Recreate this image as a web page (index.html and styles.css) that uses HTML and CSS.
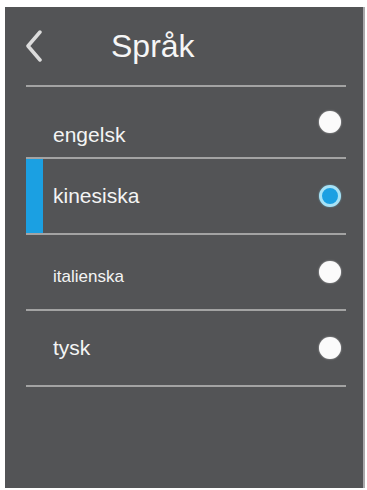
FILE: index.html
```html
<!DOCTYPE html>
<html lang="sv">
<head>
<meta charset="utf-8">
<title>Språk</title>
<link rel="stylesheet" href="styles.css">
</head>
<body>
<div class="panel">
  <header class="header">
    <svg class="back" width="18" height="32" viewBox="0 0 18 32" aria-hidden="true">
      <polyline points="15,2 3,16 15,30" fill="none" stroke="#dcdcdc" stroke-width="3.5" stroke-linecap="round" stroke-linejoin="round"/>
    </svg>
    <h1 class="title">Språk</h1>
  </header>
  <ul class="list">
    <li class="row row--first"><span class="label label--low">engelsk</span><span class="radio"></span></li>
    <li class="row row--selected"><span class="label">kinesiska</span><span class="radio radio--on"></span></li>
    <li class="row"><span class="label label--small">italienska</span><span class="radio"></span></li>
    <li class="row"><span class="label">tysk</span><span class="radio"></span></li>
  </ul>
</div>
</body>
</html>
```
FILE: styles.css
```css
html, body {
  margin: 0;
  padding: 0;
  background: #ffffff;
}
body {
  font-family: "Liberation Sans", Arial, sans-serif;
  color: #f4f4f4;
}
.panel {
  margin: 7px 2px 0 5px;
  width: 358px;
  height: 481px;
  background: #535456;
  border-right: 2px solid #a9a9ab;
  box-sizing: content-box;
}
.header {
  height: 78px;
  display: flex;
  align-items: center;
  margin: 0 17px 0 21px;
  border-bottom: 2px solid #a3a3a3;
}
.back {
  display: block;
  flex: none;
  margin-left: -1px;
}
.title {
  margin: 0 0 0 68px;
  font-size: 32px;
  font-weight: normal;
  color: #f6f6f6;
}
.list {
  list-style: none;
  margin: 0 17px 0 21px;
  padding: 0;
}
.row {
  height: 74px;
  display: flex;
  align-items: center;
  justify-content: space-between;
  padding: 0 5px 0 27px;
  border-bottom: 2px solid #a3a3a3;
}
.row--first {
  height: 70px;
}
.row--selected {
  box-shadow: inset 17px 0 0 #1ba0e2;
}
.label {
  font-size: 21px;
  color: #f4f4f4;
}
.label--low {
  padding-top: 25px;
}
.label--small {
  font-size: 17px;
  padding-top: 9px;
}
.radio {
  width: 22px;
  height: 22px;
  border-radius: 50%;
  background: #fbfbfb;
  box-shadow: 0 0 2px rgba(255, 255, 255, 0.6);
  flex: none;
}
.radio--on {
  box-sizing: border-box;
  background: #1ba0e2;
  border: 3px solid #a7e2f6;
  box-shadow: 0 0 2px rgba(120, 210, 240, 0.6);
}
```
